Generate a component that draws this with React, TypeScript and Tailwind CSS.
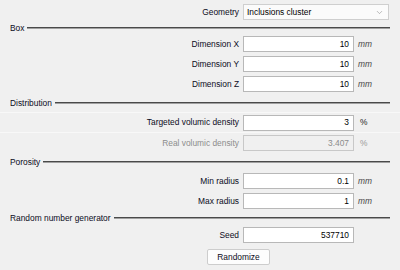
import { ChevronDown } from "lucide-react";

type Row = { label: string; value: string; unit?: string; italic?: boolean; disabled?: boolean };

const font = { fontFamily: '"Liberation Sans", Arial, sans-serif' };

function Header({ title, h }: { title: string; h: string }) {
  return (
    <div className={`flex items-center px-[10px] ${h}`}>
      <span className="text-[#0c0c1c]">{title}</span>
      <div className="ml-[3px] flex-1 border-t border-b border-t-[#4a4a4a] border-b-[#a0a0a0]" />
    </div>
  );
}

function Field({ row, lined }: { row: Row; lined?: boolean }) {
  return (
    <div className={`flex h-[20px] items-center pl-[10px] pr-[10px] ${lined ? "border-b border-[#f8f8f8]" : ""}`}>
      <div className={`flex-1 pr-[4px] text-right ${row.disabled ? "text-[#8c8c8c]" : "text-[#0c0c1c]"}`}>{row.label}</div>
      <div
        className={`flex h-[16px] w-[111px] items-center justify-end border pr-[4px] ${
          row.disabled ? "border-[#c8c8c8] bg-[#f0f0f0] text-[#8c8c8c]" : "border-[#b8b8b8] bg-white text-black"
        }`}
      >
        {row.value}
      </div>
      <div
        className={`w-[36px] pl-[4px] ${row.italic ? "italic text-[#4a4a4a]" : row.disabled ? "pl-[6px] text-[#9a9a9a]" : "pl-[6px] text-[#222]"}`}
      >
        {row.unit}
      </div>
    </div>
  );
}

export default function App() {
  return (
    <div className="h-[270px] w-[400px] overflow-hidden bg-[#f0f0f0] pt-[2px] text-[8.4px]" style={font}>
      {/* Geometry */}
      <div className="flex h-[20px] items-center pl-[10px] pr-[11px]">
        <div className="flex-1 pr-[4px] text-right text-[#0c0c1c]">Geometry</div>
        <div className="flex h-[16px] w-[146px] items-center justify-between border border-[#cfcfcf] bg-[#fbfbfb] pl-[3px] pr-[4px] text-black">
          <span>Inclusions cluster</span>
          <ChevronDown size={9} strokeWidth={1.5} className="text-[#8a8a8a]" />
        </div>
      </div>

      <Header title="Box" h="h-[12px]" />
      <Field row={{ label: "Dimension X", value: "10", unit: "mm", italic: true }} />
      <Field row={{ label: "Dimension Y", value: "10", unit: "mm", italic: true }} />
      <Field row={{ label: "Dimension Z", value: "10", unit: "mm", italic: true }} />

      <Header title="Distribution" h="h-[18px]" />
      <div className="border-t border-[#f8f8f8]">
        <Field row={{ label: "Targeted volumic density", value: "3", unit: "%" }} lined />
        <Field row={{ label: "Real volumic density", value: "3.407", unit: "%", disabled: true }} />
      </div>

      <Header title="Porosity" h="h-[18px]" />
      <Field row={{ label: "Min radius", value: "0.1", unit: "mm", italic: true }} />
      <Field row={{ label: "Max radius", value: "1", unit: "mm", italic: true }} />

      <Header title="Random number generator" h="h-[14px]" />
      <Field row={{ label: "Seed", value: "537710" }} />

      <div className="mt-[4px] pl-[207px]">
        <button className="flex h-[16px] w-[63px] items-center justify-center rounded-[2px] border border-[#cdcdcd] bg-[#fdfdfd] text-[#0c0c1c]">
          Randomize
        </button>
      </div>
    </div>
  );
}
